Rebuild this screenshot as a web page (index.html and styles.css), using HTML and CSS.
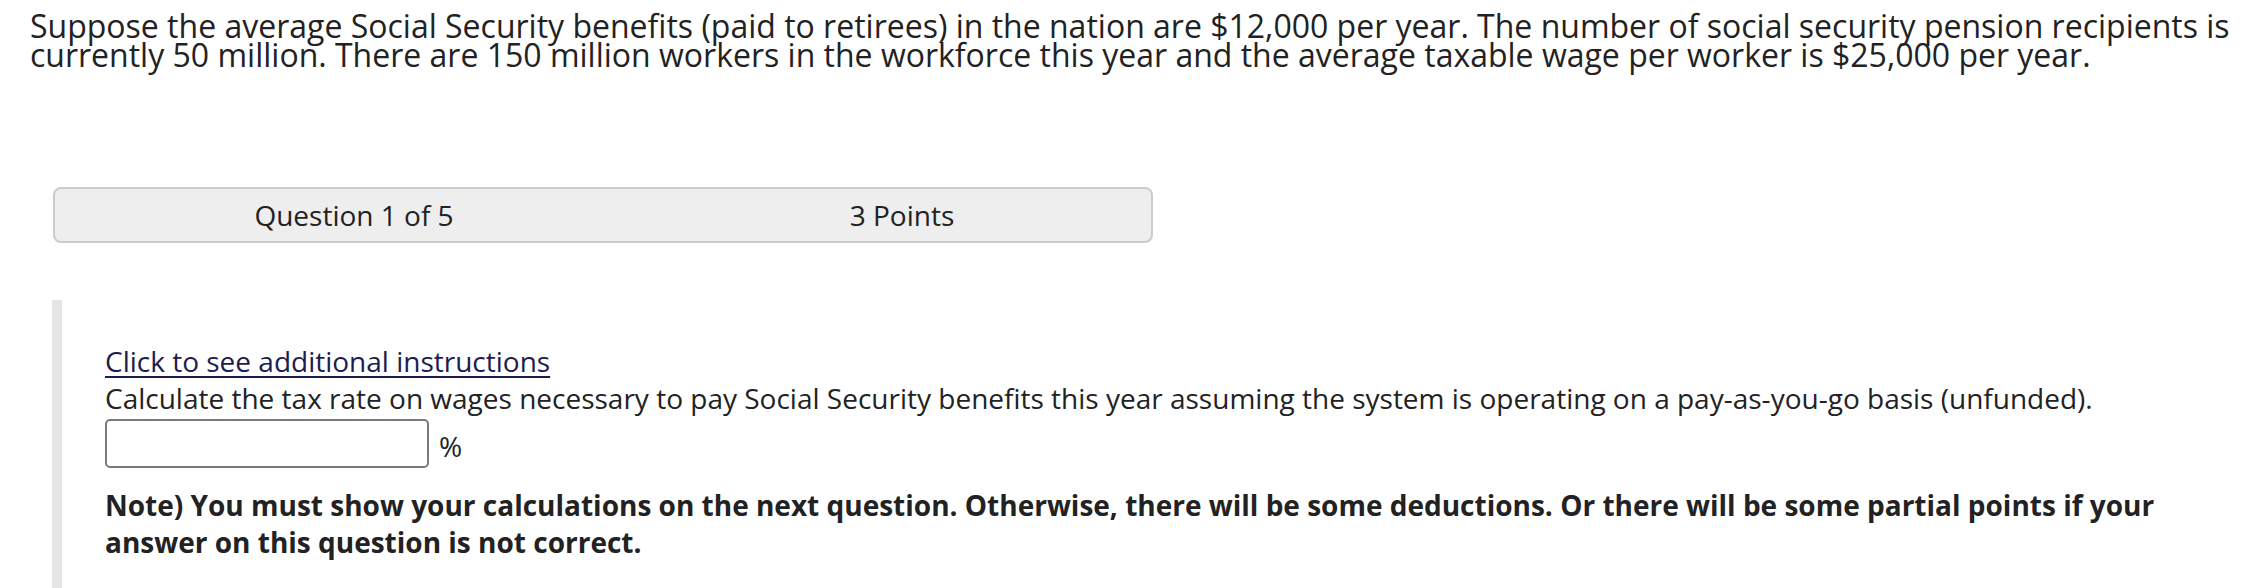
FILE: index.html
```html
<!DOCTYPE html>
<html>
<head>
<meta charset="utf-8">
<link rel="stylesheet" href="styles.css">
</head>
<body>
<p class="stem">Suppose the average Social Security benefits (paid to retirees) in the nation are $12,000 per year. The number of social security pension recipients is currently 50 million. There are 150 million workers in the workforce this year and the average taxable wage per worker is $25,000 per year.</p>
<div class="qhead">
  <div class="qcell">Question 1 of 5</div>
  <div class="qcell">3 Points</div>
</div>
<div class="qbody">
  <a class="more" href="#">Click to see additional instructions</a>
  <p class="prompt">Calculate the tax rate on wages necessary to pay Social Security benefits this year assuming the system is operating on a pay-as-you-go basis (unfunded).</p>
  <div class="answer"><input class="box" type="text"><span class="unit">%</span></div>
  <p class="note">Note) You must show your calculations on the next question. Otherwise, there will be some deductions. Or there will be some partial points if your answer on this question is not correct.</p>
</div>
</body>
</html>
```
FILE: styles.css
```css
html, body {
  margin: 0;
  padding: 0;
  background: #ffffff;
}
body {
  font-family: "Open Sans", "Liberation Sans", sans-serif;
  color: #222222;
  width: 2250px;
  height: 588px;
  overflow: hidden;
}
.stem {
  margin: 0;
  padding: 11px 20px 0 30px;
  font-size: 32px;
  line-height: 29px;
}
.qhead {
  margin: 118px 0 0 53px;
  width: 1100px;
  height: 56px;
  box-sizing: border-box;
  border: 2px solid #cccccc;
  border-radius: 8px;
  background: #eeeeee;
  display: grid;
  grid-template-columns: 598px 498px;
  align-items: center;
  font-size: 28px;
}
.qcell {
  text-align: center;
}
.qbody {
  margin: 57px 0 0 52px;
  border-left: 10px solid #e5e5e5;
  padding: 43px 40px 30px 43px;
  font-size: 28px;
  line-height: 37px;
}
.more {
  display: block;
  color: #1c1c4f;
  text-decoration: underline;
  text-underline-offset: 4px;
}
.prompt {
  margin: 0;
}
.answer {
  display: flex;
  align-items: center;
  gap: 10px;
  height: 51px;
  padding-top: 1px;
}
.box {
  width: 324px;
  height: 49px;
  box-sizing: border-box;
  border: 2px solid #7a7a7a;
  border-radius: 5px;
  margin: 0;
  padding: 0 8px;
  font: inherit;
}
.unit {
  padding-top: 6px;
}
.note {
  margin: 18px 0 0 0;
  font-weight: 700;
  line-height: 37px;
}
```
